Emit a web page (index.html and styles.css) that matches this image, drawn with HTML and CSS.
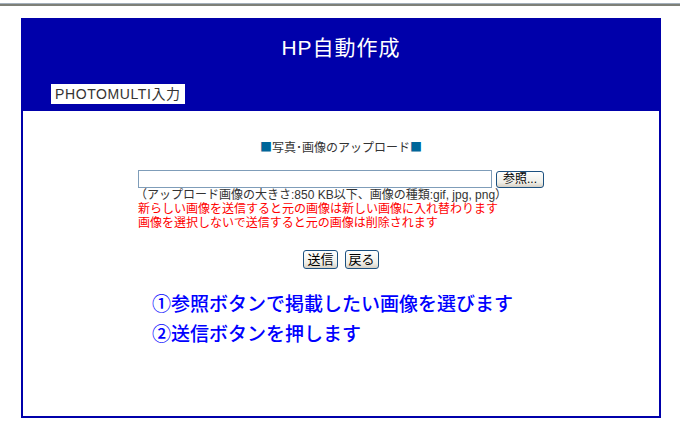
FILE: index.html
```html
<!DOCTYPE html>
<html lang="ja">
<head>
    <meta charset="UTF-8">
    <title>HP自動作成</title>
    <link rel="stylesheet" href="styles.css">
</head>
<body>
    <div class="topline"></div>
    <div class="frame">
        <div class="header">
            <h1 class="title">HP自動作成</h1>
            <div class="tab">PHOTOMULTI入力</div>
        </div>
        <div class="content">
            <p class="heading"><span class="sq">■</span>写真･画像のアップロード<span class="sq">■</span></p>
            <form class="upload">
                <div class="filerow">
                    <input type="text" class="filebox" readonly>
                    <button type="button" class="btn browse">参照...</button>
                </div>
                <p class="note">（アップロード画像の大きさ:850 KB以下、画像の種類:gif, jpg, png）</p>
                <p class="warn">新らしい画像を送信すると元の画像は新しい画像に入れ替わります</p>
                <p class="warn">画像を選択しないで送信すると元の画像は削除されます</p>
                <div class="actions">
                    <button type="button" class="btn">送信</button>
                    <button type="button" class="btn">戻る</button>
                </div>
            </form>
            <!-- 手順の説明 -->
            <div class="steps">
                <p>①参照ボタンで掲載したい画像を選びます</p>
                <p>②送信ボタンを押します</p>
            </div>
        </div>
    </div>
</body>
</html>
```
FILE: styles.css
```css
body {
    margin: 0;
    padding-top: 3px;
    background: #ffffff;
    font-family: "Liberation Sans", "Noto Sans CJK JP", sans-serif;
    color: #333333;
}

.topline {
    height: 2px;
    border-top: 1px solid #a4b0bc;
    background: #7e8078;
}

.frame {
    box-sizing: border-box;
    width: 640px;
    height: 400px;
    margin: 12px 0 0 21px;
    border: 2px solid #0000aa;
    display: flex;
    flex-direction: column;
}

.header {
    background: #0000aa;
    padding: 16px 0 7px 28px;
    height: 91px;
    box-sizing: border-box;
    display: flex;
    flex-direction: column;
    align-items: flex-start;
}

.title {
    margin: 0 28px 0 0;
    align-self: stretch;
    text-align: center;
    color: #ffffff;
    font-size: 21px;
    font-weight: normal;
    line-height: 24px;
    letter-spacing: 1px;
}

.tab {
    margin-top: 24px;
    background: #ffffff;
    color: #333333;
    font-size: 14px;
    line-height: 20px;
    height: 20px;
    padding: 0 4px 0 4px;
    letter-spacing: 0.6px;
}

.content {
    flex: 1;
    background: #ffffff;
    padding-top: 28px;
}

.heading {
    margin: 0;
    text-align: center;
    font-size: 12px;
    line-height: 16px;
}

.sq {
    color: #006699;
    font-family: "Noto Sans CJK JP", sans-serif;
}

.upload {
    width: 406px;
    margin: 14px auto 0;
}

.filerow {
    display: flex;
    gap: 4px;
    height: 18px;
}

.filebox {
    box-sizing: border-box;
    width: 354px;
    height: 18px;
    margin: 0;
    border: 1px solid #7f9db9;
    padding: 0 2px;
    font: inherit;
}

.note, .warn {
    margin: 0;
    font-size: 12px;
    line-height: 14px;
    white-space: nowrap;
}

.note {
    margin-left: -3px;
}

.warn {
    color: #ff0000;
}

.btn {
    box-sizing: border-box;
    height: 19px;
    margin: 0;
    padding: 0 3px;
    border: 1px solid #1c5180;
    border-radius: 3px;
    background: linear-gradient(#ffffff, #f0efe8 70%, #d6d0c5);
    color: #000000;
    font-family: "Liberation Sans", "Noto Sans CJK JP", sans-serif;
    font-size: 13px;
    line-height: 17px;
}

.browse {
    width: 48px;
    height: 17px;
    margin-top: 1px;
    font-size: 12px;
    line-height: 15px;
}

.actions {
    display: flex;
    justify-content: center;
    gap: 7px;
    margin-top: 20px;
}

.steps {
    margin: 21px 0 0 129px;
}

.steps p {
    margin: 0;
    color: #0000ff;
    font-size: 19px;
    font-weight: 500;
    line-height: 30px;
}
```
